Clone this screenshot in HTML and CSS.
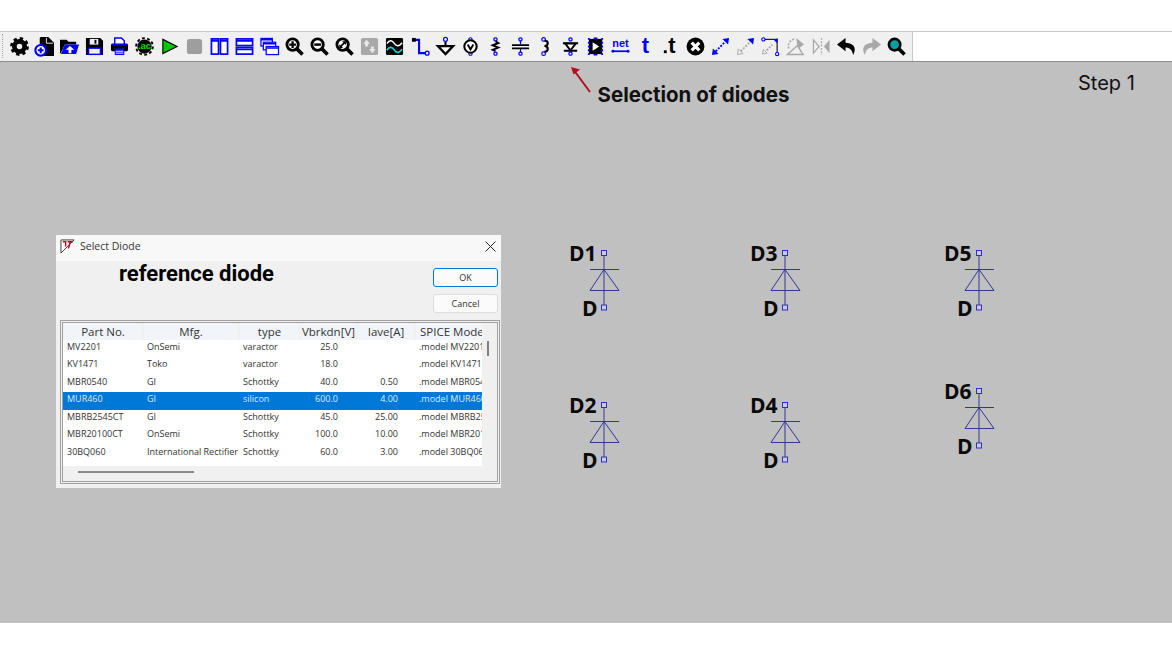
FILE: index.html
```html
<!DOCTYPE html>
<html>
<head>
    <meta charset="utf-8">
    <title>Selection of diodes</title>
    <link rel="stylesheet" href="styles.css">
</head>
<body>
<div class="top-gap"></div>

<div class="toolbar-row">
    <div class="toolbar">
        <div class="grip"></div>
        <!-- settings -->
        <svg class="ico" viewBox="0 0 20 20"><circle cx="10" cy="10" r="5.400" fill="none" stroke="#000" stroke-width="5"/><circle cx="10" cy="10" r="8.300" fill="none" stroke="#000" stroke-width="3.200" stroke-dasharray="3.400 3.120"/></svg>
        <!-- new schematic -->
        <svg class="ico" viewBox="0 0 20 20"><path d="M6 0h8l6 6v14H7V12H5V1z" fill="#000"/><path d="M12 1v5.500h7" fill="none" stroke="#f0f0f0"/><circle cx="6" cy="14" r="5.600" fill="#fff" stroke="#00f" stroke-width="2.200"/><path d="M3 14h6M6 11v6" stroke="#00f" stroke-width="2.200"/></svg>
        <!-- open -->
        <svg class="ico" viewBox="0 0 20 20"><path d="M0 17V3h7l2 2h8v3H5L1 17z" fill="#000"/><path d="M1 18l4-10h15l-3 10z" fill="#00f"/><path d="M10.500 9.500l4.500 4h-3v3.500h-3v-3.500H6z" fill="#fff"/></svg>
        <!-- save -->
        <svg class="ico" viewBox="0 0 20 20"><path d="M1 1h15l3 3v15H1z" fill="#000"/><rect x="5" y="2" width="9" height="6" fill="#f0f0f0"/><rect x="10" y="3" width="2" height="4" fill="#000"/><rect x="3" y="11" width="14" height="8" fill="#00f"/><rect x="4.500" y="12.500" width="11" height="5" fill="#f0f0f0"/></svg>
        <!-- print -->
        <svg class="ico" viewBox="0 0 20 20"><path d="M5 1h7l3 3v4H5z" fill="#fff" stroke="#00f" stroke-width="1.500"/><rect x="1" y="7" width="18" height="8" rx="1.500" fill="#000"/><rect x="2" y="7" width="16" height="2" fill="#00f"/><rect x="5" y="12" width="10" height="7" fill="#00f"/><path d="M6 15h8M6 17h8" stroke="#fff"/></svg>
        <!-- .ac -->
        <svg class="ico" viewBox="0 0 20 20"><circle cx="10" cy="10" r="7.500" fill="#000"/><circle cx="10" cy="10" r="8.800" fill="none" stroke="#000" stroke-width="2" stroke-dasharray="3 2.500"/><text x="10" y="13" class="ico-ac">.ac</text></svg>
        <!-- run -->
        <svg class="ico" viewBox="0 0 20 20"><path d="M3 2.500L18 10 3 17.500z" fill="#00c800" stroke="#000" stroke-width="1.200"/></svg>
        <!-- halt, disabled -->
        <svg class="ico" viewBox="0 0 20 20"><rect x="2" y="2" width="16" height="16" rx="3" fill="#9e9e9e"/></svg>
        <!-- vertical tile -->
        <svg class="ico" viewBox="0 0 20 20"><rect x="1.500" y="2" width="7.500" height="16" fill="#fff" stroke="#00f" stroke-width="1.800"/><rect x="11" y="2" width="7.500" height="16" fill="#fff" stroke="#00f" stroke-width="1.800"/><path d="M1.500 4h7.500M11 4h7.500" stroke="#00f" stroke-width="2"/></svg>
        <!-- horizontal tile -->
        <svg class="ico" viewBox="0 0 20 20"><rect x="1.500" y="2" width="17" height="7" fill="#fff" stroke="#00f" stroke-width="1.800"/><rect x="1.500" y="11" width="17" height="7" fill="#fff" stroke="#00f" stroke-width="1.800"/><path d="M1.500 4h17M1.500 13h17" stroke="#00f" stroke-width="2"/></svg>
        <!-- cascade -->
        <svg class="ico" viewBox="0 0 20 20"><rect x="1" y="1.500" width="12" height="8" fill="#fff" stroke="#00f" stroke-width="1.300"/><rect x="3.500" y="5.500" width="13" height="8" fill="#fff" stroke="#00f" stroke-width="1.300"/><rect x="6.500" y="10" width="13" height="8.500" fill="#fff" stroke="#00f" stroke-width="1.300"/><path d="M1 3h12M3.500 7h13M6.500 11.500h13" stroke="#00f" stroke-width="1.600"/></svg>
        <!-- zoom in -->
        <svg class="ico" viewBox="0 0 20 20"><circle cx="8" cy="8" r="6" fill="#fff" stroke="#000" stroke-width="3"/><path d="M12.500 12.500L18.500 18.500" stroke="#000" stroke-width="3.800"/><path d="M4.500 8h7M8 4.500v7" stroke="#000" stroke-width="2.400"/></svg>
        <!-- zoom out -->
        <svg class="ico" viewBox="0 0 20 20"><circle cx="8" cy="8" r="6" fill="#fff" stroke="#000" stroke-width="3"/><path d="M12.500 12.500L18.500 18.500" stroke="#000" stroke-width="3.800"/><path d="M4.500 8h7" stroke="#000" stroke-width="2.600"/></svg>
        <!-- zoom fit -->
        <svg class="ico" viewBox="0 0 20 20"><circle cx="8" cy="8" r="6" fill="#fff" stroke="#000" stroke-width="3"/><path d="M12.500 12.500L18.500 18.500" stroke="#000" stroke-width="3.800"/><path d="M5.500 10.500l5-5" stroke="#000" stroke-width="1.800"/><path d="M4.500 7.500v4h4zM7.500 4.500h4v4z" fill="#000"/></svg>
        <!-- pan, disabled -->
        <svg class="ico" viewBox="0 0 20 20"><rect x="1" y="1" width="18" height="18" rx="2" fill="#a8a8a8"/><path d="M7 3l3.500 4H8.500v3h-3V7H3.500z" fill="#e8e8e8"/><path d="M13 17l-3.500-4h2v-3h3v3h2z" fill="#e8e8e8"/></svg>
        <!-- waveform -->
        <svg class="ico" viewBox="0 0 20 20"><rect x="1" y="1" width="18" height="18" rx="1.500" fill="#000"/><path d="M2 7c3-5 6-3 8 0s5 3 8-1" fill="none" stroke="#fff" stroke-width="1.500"/><path d="M2 14c3-5 6-3 8 0s5 3 8-1" fill="none" stroke="#00d8d8" stroke-width="1.800"/></svg>
        <!-- wire -->
        <svg class="ico" viewBox="0 0 20 20"><path d="M3 3h5.500v14H17" fill="none" stroke="#00f" stroke-width="2.200"/><rect x="1" y="1" width="4" height="4" fill="#000"/><circle cx="17" cy="17" r="2" fill="#fff" stroke="#00f" stroke-width="1.400"/></svg>
        <!-- ground -->
        <svg class="ico" viewBox="0 0 20 20"><circle cx="10" cy="2.500" r="2" fill="#fff" stroke="#00f" stroke-width="1.300"/><path d="M10 5v4" stroke="#000" stroke-width="2.200"/><path d="M2 9.500h16L10 18z" fill="#fff" stroke="#000" stroke-width="2.400"/></svg>
        <!-- voltage node -->
        <svg class="ico" viewBox="0 0 20 20"><path d="M10 3v14" stroke="#00f" stroke-width="1.200"/><circle cx="10" cy="2.500" r="1.700" fill="#fff" stroke="#00f" stroke-width="1.200"/><circle cx="10" cy="17.500" r="1.700" fill="#fff" stroke="#00f" stroke-width="1.200"/><circle cx="10" cy="10" r="6.500" fill="#fff" stroke="#000" stroke-width="2.200"/><path d="M7 8l3 5 3-5" fill="none" stroke="#000" stroke-width="2"/></svg>
        <!-- resistor -->
        <svg class="ico" viewBox="0 0 20 20"><circle cx="10" cy="2.500" r="1.700" fill="#fff" stroke="#00f" stroke-width="1.300"/><circle cx="10" cy="17.500" r="1.700" fill="#fff" stroke="#00f" stroke-width="1.300"/><path d="M10 4.500l3 1.800-6 2.400 6 2.400-6 2.400 3 1.500" fill="none" stroke="#000" stroke-width="2"/></svg>
        <!-- capacitor -->
        <svg class="ico" viewBox="0 0 20 20"><circle cx="10" cy="2.500" r="1.700" fill="#fff" stroke="#00f" stroke-width="1.300"/><circle cx="10" cy="17.500" r="1.700" fill="#fff" stroke="#00f" stroke-width="1.300"/><path d="M10 4v4M10 12v4" stroke="#00f" stroke-width="1.300"/><path d="M1 8.500h18M1 12h18" stroke="#000" stroke-width="2"/></svg>
        <!-- inductor -->
        <svg class="ico" viewBox="0 0 20 20"><circle cx="8" cy="2.500" r="1.900" fill="#fff" stroke="#00f" stroke-width="1.300"/><circle cx="8" cy="17.500" r="1.900" fill="#fff" stroke="#00f" stroke-width="1.300"/><path d="M9 4c4.500 0 4.500 5 0 5.500 4.500 .5 4.500 5.500 0 6" fill="none" stroke="#000" stroke-width="2.200"/></svg>
        <!-- diode -->
        <svg class="ico" viewBox="0 0 20 20"><circle cx="10" cy="2.500" r="1.700" fill="#fff" stroke="#00f" stroke-width="1.300"/><circle cx="10" cy="17.500" r="1.700" fill="#fff" stroke="#00f" stroke-width="1.300"/><path d="M2 6.500h16M3 14.500h14" stroke="#000" stroke-width="2"/><path d="M10 14L4.500 7h11z" fill="#fff" stroke="#000" stroke-width="2"/></svg>
        <!-- component -->
        <svg class="ico" viewBox="0 0 20 20"><rect x="3" y="2" width="14" height="16" fill="#000"/><path d="M7 5.500l7 4.500-7 4.500z" fill="#fff"/><path d="M2 2h2M2 6h2M2 10h2M2 14h2M2 18h2M16 2h2M16 6h2M16 10h2M16 14h2M16 18h2M8 1.500h4M8 18.500h4" stroke="#00f" stroke-width="2"/></svg>
        <!-- label net -->
        <svg class="ico" viewBox="0 0 20 20"><text x="10" y="11" class="ico-net">net</text><path d="M2 15h16" stroke="#00f" stroke-width="1.800"/><circle cx="2" cy="15" r="1.500" fill="#00f"/><circle cx="18" cy="15" r="1.500" fill="#00f"/></svg>
        <!-- text -->
        <svg class="ico" viewBox="0 0 20 20"><text x="10" y="17" class="ico-t">t</text></svg>
        <!-- spice directive -->
        <svg class="ico" viewBox="0 0 20 20"><text x="11.500" y="17" class="ico-dot">t</text><rect x="3" y="14" width="3" height="3" fill="#000"/></svg>
        <!-- delete -->
        <svg class="ico" viewBox="0 0 20 20"><circle cx="10" cy="10" r="9.400" fill="#000"/><path d="M6 6l8 8M14 6l-8 8" stroke="#fff" stroke-width="3.400"/></svg>
        <!-- move -->
        <svg class="ico" viewBox="0 0 20 20"><path d="M19 1l-1 7-6-6z" fill="#00f"/><path d="M1 19l1-7 6 6z" fill="#00f"/><path d="M5 15L15 5" stroke="#00f" stroke-width="2" stroke-dasharray="2 1.500"/></svg>
        <!-- drag, part disabled -->
        <svg class="ico" viewBox="0 0 20 20"><path d="M19 1l-1 7-6-6z" fill="#00f"/><path d="M1.500 18.500l1-6 5 5z" fill="#f0f0f0" stroke="#a8a8a8"/><path d="M5 15L15 5" stroke="#a8a8a8" stroke-width="2" stroke-dasharray="2 1.500"/></svg>
        <!-- wire drag -->
        <svg class="ico" viewBox="0 0 20 20"><path d="M3 2.500h14v14" fill="none" stroke="#222" stroke-width="1.300"/><circle cx="2.500" cy="2.500" r="1.700" fill="#fff" stroke="#00f" stroke-width="1.200"/><circle cx="17" cy="18" r="1.700" fill="#fff" stroke="#00f" stroke-width="1.200"/><path d="M18 1.500l-1 5-4-4z" fill="#00f"/><path d="M1.500 18l1-5 4 4z" fill="#f0f0f0" stroke="#a8a8a8"/><path d="M6 14l6-6" stroke="#a8a8a8" stroke-width="2" stroke-dasharray="2 1.500"/></svg>
        <!-- rotate, disabled -->
        <svg class="ico" viewBox="0 0 20 20"><path d="M3 12C1 7 5 3 9 2" fill="none" stroke="#a8a8a8" stroke-width="1.800" stroke-dasharray="2 1.500"/><path d="M11 1l8 7-7 5z" fill="#a8a8a8"/><path d="M1.500 18.500L12 9l6 9.500z" fill="#f0f0f0" stroke="#a8a8a8" stroke-width="1.500"/></svg>
        <!-- mirror, disabled -->
        <svg class="ico" viewBox="0 0 20 20"><path d="M1.500 3l6 7-6 7z" fill="#f0f0f0" stroke="#a8a8a8" stroke-width="1.300"/><path d="M18.500 3l-6 7 6 7z" fill="#a8a8a8"/><path d="M10 1v18" stroke="#a8a8a8" stroke-width="1.400" stroke-dasharray="2 1.500"/></svg>
        <!-- undo -->
        <svg class="ico" viewBox="0 0 20 20"><path d="M9 1L0 8l9 7v-4c4 0 7 2 8 8 3-6 3-12-8-13z" fill="#000"/></svg>
        <!-- redo, disabled -->
        <svg class="ico" viewBox="0 0 20 20"><path d="M11 1l9 7-9 7v-4c-4 0-7 2-8 8-3-6-3-12 8-13z" fill="#a8a8a8"/></svg>
        <!-- find -->
        <svg class="ico" viewBox="0 0 20 20"><circle cx="8" cy="8" r="6" fill="#00a0a0" stroke="#000" stroke-width="2.800"/><path d="M12.500 12.500L18.500 18.500" stroke="#000" stroke-width="3.800"/></svg>
    </div>
</div>

<div class="canvas">
    <div class="step">Step 1</div>

    <svg class="arrow" viewBox="0 0 22 28"><path d="M20 26L3 3" stroke="#b01020" stroke-width="2" fill="none"/><path d="M1 1l9 2.500-6.500 5z" fill="#b01020"/></svg>
    <div class="note">Selection of diodes</div>

    <div class="dialog">
        <div class="dialog-title">
            <svg class="lt-logo" viewBox="0 0 16 16"><path d="M1 1h14L1 15z" fill="#fff" stroke="#333"/><path d="M3 3h3v5M8 3h6M11 3l-2 7" fill="none" stroke="#b01020" stroke-width="1.600"/></svg>
            <span class="dialog-name">Select Diode</span>
            <svg class="close-x" viewBox="0 0 11 11"><path d="M.5.500l10 10M10.500.500l-10 10" stroke="#222" stroke-width="1"/></svg>
        </div>
        <div class="dialog-head">
            <div class="ref-title">reference diode</div>
            <div class="buttons">
                <div class="btn btn-ok">OK</div>
                <div class="btn">Cancel</div>
            </div>
        </div>
        <div class="list-frame">
            <div class="list">
                <div class="list-head">
                    <span>Part No.</span>
                    <span>Mfg.</span>
                    <span>type</span>
                    <span>Vbrkdn[V]</span>
                    <span>Iave[A]</span>
                    <span class="head-spice">SPICE Model</span>
                </div>
                <div class="list-row">
                    <span>MV2201</span><span>OnSemi</span><span>varactor</span><span class="num">25.0</span><span class="num"></span><span>.model MV2201</span>
                </div>
                <div class="list-row">
                    <span>KV1471</span><span>Toko</span><span>varactor</span><span class="num">18.0</span><span class="num"></span><span>.model KV1471</span>
                </div>
                <div class="list-row">
                    <span>MBR0540</span><span>GI</span><span>Schottky</span><span class="num">40.0</span><span class="num">0.50</span><span>.model MBR0540</span>
                </div>
                <div class="list-row selected">
                    <span>MUR460</span><span>GI</span><span>silicon</span><span class="num">600.0</span><span class="num">4.00</span><span>.model MUR460</span>
                </div>
                <div class="list-row">
                    <span>MBRB2545CT</span><span>GI</span><span>Schottky</span><span class="num">45.0</span><span class="num">25.00</span><span>.model MBRB2545</span>
                </div>
                <div class="list-row">
                    <span>MBR20100CT</span><span>OnSemi</span><span>Schottky</span><span class="num">100.0</span><span class="num">10.00</span><span>.model MBR20100</span>
                </div>
                <div class="list-row">
                    <span>30BQ060</span><span>International Rectifier</span><span>Schottky</span><span class="num">60.0</span><span class="num">3.00</span><span>.model 30BQ060</span>
                </div>
            </div>
            <div class="vscroll"><div class="vthumb"></div></div>
            <div class="hscroll"><div class="hthumb"></div></div>
        </div>
    </div>

    <svg class="part part-d1" viewBox="0 0 66 68"><use href="#diode"/><text x="-1" y="18" class="ref">D1</text><text x="12" y="73" class="val">D</text></svg>
    <svg class="part part-d2" viewBox="0 0 66 68"><use href="#diode"/><text x="-1" y="18" class="ref">D2</text><text x="12" y="73" class="val">D</text></svg>
    <svg class="part part-d3" viewBox="0 0 66 68"><use href="#diode"/><text x="-1" y="18" class="ref">D3</text><text x="12" y="73" class="val">D</text></svg>
    <svg class="part part-d4" viewBox="0 0 66 68"><use href="#diode"/><text x="-1" y="18" class="ref">D4</text><text x="12" y="73" class="val">D</text></svg>
    <svg class="part part-d5" viewBox="0 0 66 68"><use href="#diode"/><text x="-1" y="18" class="ref">D5</text><text x="12" y="73" class="val">D</text></svg>
    <svg class="part part-d6" viewBox="0 0 66 68"><use href="#diode"/><text x="-1" y="18" class="ref">D6</text><text x="12" y="73" class="val">D</text></svg>
</div>

<div class="bottom-gap"></div>

<svg class="defs" width="0" height="0">
    <symbol id="diode" viewBox="0 0 66 68" width="66" height="68">
        <rect x="31.500" y="7.500" width="5" height="5" fill="#c8c8e8" stroke="#3030c0"/>
        <rect x="31.500" y="62" width="5" height="5" fill="#c8c8e8" stroke="#3030c0"/>
        <path d="M34 12.500V62M20 26.500H49M34 26.500L20 47.500H49Z" fill="none" stroke="#34349a" stroke-width="1"/>
    </symbol>
</svg>
</body>
</html>
```

FILE: styles.css
```css
body {
    margin: 0;
    padding: 0;
    background-color: #fff;
    font-family: "Open Sans", "Noto Sans", sans-serif;
    overflow: hidden;
}

.top-gap {
    height: 31px;
}

.bottom-gap {
    height: 32px;
}

.defs {
    display: block;
    height: 0;
}

/* toolbar */
.toolbar-row {
    height: 29px;
    border-top: 1px solid #c8c8c8;
    border-bottom: 1px solid #8c8c8c;
}

.toolbar {
    display: flex;
    align-items: center;
    width: 913px;
    height: 29px;
    box-sizing: border-box;
    padding-left: 6.500px;
    background-color: #f0f0f0;
    border-right: 1px solid #c8c8c8;
    position: relative;
}

.grip {
    position: absolute;
    left: 2px;
    top: 2px;
    height: 24px;
    border-left: 1px dotted #a8a8a8;
}

.ico {
    width: 19px;
    height: 19px;
    flex: none;
    margin: 0 3.040px;
    overflow: visible;
}

.ico text {
    font-family: "Liberation Sans", sans-serif;
    font-weight: 700;
    text-anchor: middle;
}

.ico-ac {
    font-size: 10px;
    fill: #00e000;
}

.ico-net {
    font-size: 11.500px;
    fill: #00f;
}

.ico-t {
    font-size: 23px;
    fill: #00f;
}

.ico-dot {
    font-size: 23px;
    fill: #000;
}

/* canvas */
.canvas {
    position: relative;
    height: 561px;
    background-color: #c0c0c0;
}

.step {
    position: absolute;
    left: 1078px;
    top: 8px;
    font-family: "Inter", sans-serif;
    font-size: 20px;
    line-height: 26px;
    color: #111;
}

.note {
    position: absolute;
    left: 597.500px;
    top: 20px;
    font-family: "Inter", sans-serif;
    font-weight: 700;
    font-size: 20.500px;
    line-height: 26px;
    color: #111;
}

.arrow {
    position: absolute;
    left: 570px;
    top: 4px;
    width: 22px;
    height: 28px;
}

.part {
    position: absolute;
    width: 66px;
    height: 68px;
    overflow: visible;
}

.part text {
    font-family: "Open Sans", sans-serif;
    font-weight: 700;
    font-size: 21px;
    fill: #0a0a0a;
}

.part-d1 { left: 570px; top: 181px; }
.part-d2 { left: 570px; top: 333px; }
.part-d3 { left: 751px; top: 181px; }
.part-d4 { left: 751px; top: 333px; }
.part-d5 { left: 945px; top: 181px; }
.part-d6 { left: 945px; top: 319px; }

/* dialog */
.dialog {
    position: absolute;
    left: 56px;
    top: 173px;
    width: 445px;
    height: 253px;
    box-sizing: border-box;
    background-color: #f0f0f0;
    color: #333;
}

.dialog-title {
    display: flex;
    align-items: center;
    height: 22px;
    padding: 0 5px 4px 4px;
    background-color: #f8f8f8;
}

.lt-logo {
    width: 15px;
    height: 15px;
    margin-right: 5px;
}

.dialog-name {
    flex: 1;
    font-size: 10.500px;
    color: #333;
}

.close-x {
    width: 11px;
    height: 11px;
}

.dialog-head {
    display: flex;
    justify-content: space-between;
    height: 59px;
    padding-right: 3px;
}

.ref-title {
    margin: 0 0 0 63px;
    font-family: "Roboto", sans-serif;
    font-weight: 700;
    font-size: 22px;
    line-height: 25px;
    color: #000;
}

.buttons {
    display: flex;
    flex-direction: column;
    gap: 7px;
    padding-top: 7px;
}

.btn {
    width: 65px;
    height: 19px;
    box-sizing: border-box;
    background-color: #fbfbfb;
    border: 1px solid #dcdcdc;
    border-radius: 3px;
    font-size: 9px;
    line-height: 17px;
    text-align: center;
}

.btn-ok {
    border-color: #0078d7;
}

.list-frame {
    position: relative;
    height: 164px;
    margin: 0 1px 0 4px;
    box-sizing: border-box;
    border: 3px double #a0a0a0;
    background-color: #f0f0f0;
    overflow: hidden;
}

.list {
    width: 419px;
    height: 143px;
    background-color: #fff;
    overflow: hidden;
}

.list-head,
.list-row {
    display: grid;
    grid-template-columns: 80px 96px 61px 57px 58px 67px;
    padding-left: 1px;
    white-space: nowrap;
}

.list-head {
    height: 16.500px;
    background-color: #f0f0f0;
    font-size: 11.500px;
    line-height: 18px;
    text-align: center;
}

.list-head span {
    margin-right: 2px;
    background-color: #f1f5fa;
    overflow: hidden;
}

.list-head .head-spice {
    margin-right: 0;
    padding-left: 4px;
    text-align: left;
}

.list-row {
    height: 17.600px;
    font-size: 9px;
    line-height: 13.500px;
}

.list-row span {
    padding-left: 3px;
    overflow: hidden;
}

.list-row .num {
    padding-left: 0;
    padding-right: 20px;
    text-align: right;
}

.list-row .num:nth-child(5) {
    padding-right: 18px;
}

.list-row.selected {
    background-color: #0078d7;
    color: #dceafa;
}

.vscroll {
    position: absolute;
    right: 8px;
    top: 18px;
    width: 2px;
}

.vthumb {
    height: 15px;
    background-color: #808080;
}

.hscroll {
    position: absolute;
    left: 15px;
    bottom: 8px;
}

.hthumb {
    width: 116px;
    height: 2px;
    background-color: #8a8a8a;
}
```
